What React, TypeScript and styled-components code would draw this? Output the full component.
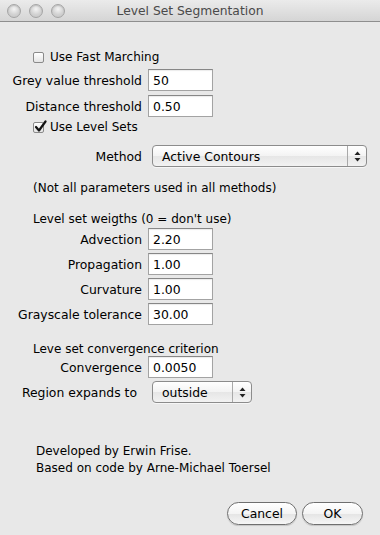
import React from 'react';
import styled, { createGlobalStyle } from 'styled-components';

const GlobalStyle = createGlobalStyle`
  html, body {
    margin: 0;
    padding: 0;
    background: #e8e8e8;
  }
  body {
    font-family: "DejaVu Sans", "Liberation Sans", sans-serif;
    font-size: 12px;
    color: #000;
  }
`;

const Window = styled.div`
  width: 380px;
  height: 535px;
  display: flex;
  flex-direction: column;
  background: #e8e8e8;
  overflow: hidden;
`;

const TitleBar = styled.div`
  height: 21px;
  flex: none;
  display: grid;
  grid-template-columns: 1fr auto 1fr;
  align-items: center;
  background: linear-gradient(#ebebeb, #d5d5d5);
  border-bottom: 1px solid #8e8e8e;
`;

const Lights = styled.div`
  display: flex;
  gap: 8px;
  padding-left: 7px;
`;

const Light = styled.span`
  width: 12px;
  height: 12px;
  border-radius: 50%;
  border: 1px solid #a5a5a5;
  background: radial-gradient(circle at 50% 35%, #f4f4f4 0%, #d2d2d2 55%, #c4c4c4 100%);
  box-shadow: inset 0 1px 1px rgba(0, 0, 0, 0.12);
`;

const Title = styled.div`
  color: #4a4a4a;
  font-size: 12.3px;
`;

const Body = styled.div`
  flex: 1;
  display: flex;
  flex-direction: column;
`;

const CheckRow = styled.label<{ $top: number }>`
  display: flex;
  align-items: center;
  gap: 6px;
  height: 14px;
  margin-top: ${p => p.$top}px;
  padding-left: 33px;
`;

const Box = styled.span`
  width: 9px;
  height: 9px;
  border: 1px solid #8a8a8a;
  border-radius: 2px;
  background: linear-gradient(#ffffff, #e4e4e4);
  position: relative;
`;

const Check = styled.svg`
  position: absolute;
  left: 0px;
  top: -3px;
`;

const FieldRow = styled.div<{ $top: number }>`
  display: flex;
  align-items: center;
  height: 22px;
  margin-top: ${p => p.$top}px;
`;

const Label = styled.span<{ $width: number; $gap: number }>`
  width: ${p => p.$width}px;
  margin-right: ${p => p.$gap}px;
  text-align: right;
  white-space: nowrap;
  font-size: 12.4px;
`;

const Input = styled.div`
  width: 55px;
  height: 20px;
  box-sizing: content-box;
  padding: 0 4px;
  background: #fff;
  border: 1px solid #a3a3a3;
  border-top-color: #878787;
  box-shadow: inset 0 1px 1px rgba(0, 0, 0, 0.08);
  display: flex;
  align-items: center;
  font-size: 12.4px;
`;

const Popup = styled.div<{ $width: number }>`
  width: ${p => p.$width}px;
  height: 20px;
  border: 1px solid #8c8c8c;
  border-radius: 4px;
  background: linear-gradient(#ffffff 0%, #f3f3f3 50%, #e6e6e6 51%, #f2f2f2 100%);
  box-shadow: 0 1px 0 rgba(255, 255, 255, 0.6);
  display: flex;
  align-items: center;
`;

const PopupText = styled.span`
  flex: 1;
  padding-left: 9px;
  font-size: 12.4px;
`;

const PopupArrows = styled.span`
  width: 18px;
  height: 100%;
  border-left: 1px solid #a9a9a9;
  display: flex;
  align-items: center;
  justify-content: center;
`;

const Note = styled.div<{ $top: number; $left?: number }>`
  height: 14px;
  line-height: 14px;
  margin-top: ${p => p.$top}px;
  padding-left: ${p => p.$left ?? 33}px;
  white-space: nowrap;
`;

const Footer = styled.div`
  margin-top: auto;
  display: flex;
  flex-direction: column;
`;

const Buttons = styled.div`
  display: flex;
  justify-content: flex-end;
  gap: 5px;
  padding: 0 17px 10px 0;
  margin-top: 27px;
`;

const Button = styled.button<{ $width: number }>`
  width: ${p => p.$width}px;
  height: 23px;
  border: 1px solid #6f6f6f;
  border-radius: 12px;
  background: linear-gradient(#ffffff 0%, #f4f4f4 50%, #e4e4e4 51%, #f6f6f6 100%);
  box-shadow: 0 1px 1px rgba(0, 0, 0, 0.15);
  font-family: "DejaVu Sans", "Liberation Sans", sans-serif;
  font-size: 12.4px;
  color: #000;
  padding: 0;
`;

const Arrows = () => (
  <svg width="7" height="11" viewBox="0 0 7 11">
    <path d="M3.5 0.5 L6.5 4 L0.5 4 Z" fill="#222" />
    <path d="M0.5 7 L6.5 7 L3.5 10.5 Z" fill="#222" />
  </svg>
);

const CheckBox = ({ checked }: { checked?: boolean }) => (
  <Box>
    {checked && (
      <Check width="13" height="13" viewBox="0 0 13 13">
        <path d="M2 7 L5 10.5 L11.5 1.5" stroke="#111" strokeWidth="2.2" fill="none" strokeLinecap="round" strokeLinejoin="round" />
      </Check>
    )}
  </Box>
);

const numeric = [
  { label: 'Advection', value: '2.20', top: 2 },
  { label: 'Propagation', value: '1.00', top: 3 },
  { label: 'Curvature', value: '1.00', top: 3 },
  { label: 'Grayscale tolerance', value: '30.00', top: 3 },
];

const App = () => {
  return (
    <Window>
      <GlobalStyle />
      <TitleBar>
        <Lights>
          <Light />
          <Light />
          <Light />
        </Lights>
        <Title>Level Set Segmentation</Title>
        <span />
      </TitleBar>
      <Body>
        <CheckRow $top={28}>
          <CheckBox />
          Use Fast Marching
        </CheckRow>
        <FieldRow $top={5}>
          <Label $width={142} $gap={6}>Grey value threshold</Label>
          <Input>50</Input>
        </FieldRow>
        <FieldRow $top={4}>
          <Label $width={142} $gap={6}>Distance threshold</Label>
          <Input>0.50</Input>
        </FieldRow>
        <CheckRow $top={3}>
          <CheckBox checked />
          Use Level Sets
        </CheckRow>
        <FieldRow $top={11}>
          <Label $width={142} $gap={10}>Method</Label>
          <Popup $width={213}>
            <PopupText>Active Contours</PopupText>
            <PopupArrows>
              <Arrows />
            </PopupArrows>
          </Popup>
        </FieldRow>
        <Note $top={14}>(Not all parameters used in all methods)</Note>
        <Note $top={17}>Level set weigths (0 = don't use)</Note>
        {numeric.map((item, index) => (
          <FieldRow key={`num-${index}`} $top={item.top}>
            <Label $width={142} $gap={6}>{item.label}</Label>
            <Input>{item.value}</Input>
          </FieldRow>
        ))}
        <Note $top={17}>Leve set convergence criterion</Note>
        <FieldRow $top={0}>
          <Label $width={142} $gap={6}>Convergence</Label>
          <Input>0.0050</Input>
        </FieldRow>
        <FieldRow $top={3}>
          <Label $width={137} $gap={15}>Region expands to</Label>
          <Popup $width={98}>
            <PopupText>outside</PopupText>
            <PopupArrows>
              <Arrows />
            </PopupArrows>
          </Popup>
        </FieldRow>
        <Footer>
          <Note $top={0} $left={36}>Developed by Erwin Frise.</Note>
          <Note $top={3} $left={36}>Based on code by Arne-Michael Toersel</Note>
          <Buttons>
            <Button $width={70}>Cancel</Button>
            <Button $width={61}>OK</Button>
          </Buttons>
        </Footer>
      </Body>
    </Window>
  );
};

export default App;
